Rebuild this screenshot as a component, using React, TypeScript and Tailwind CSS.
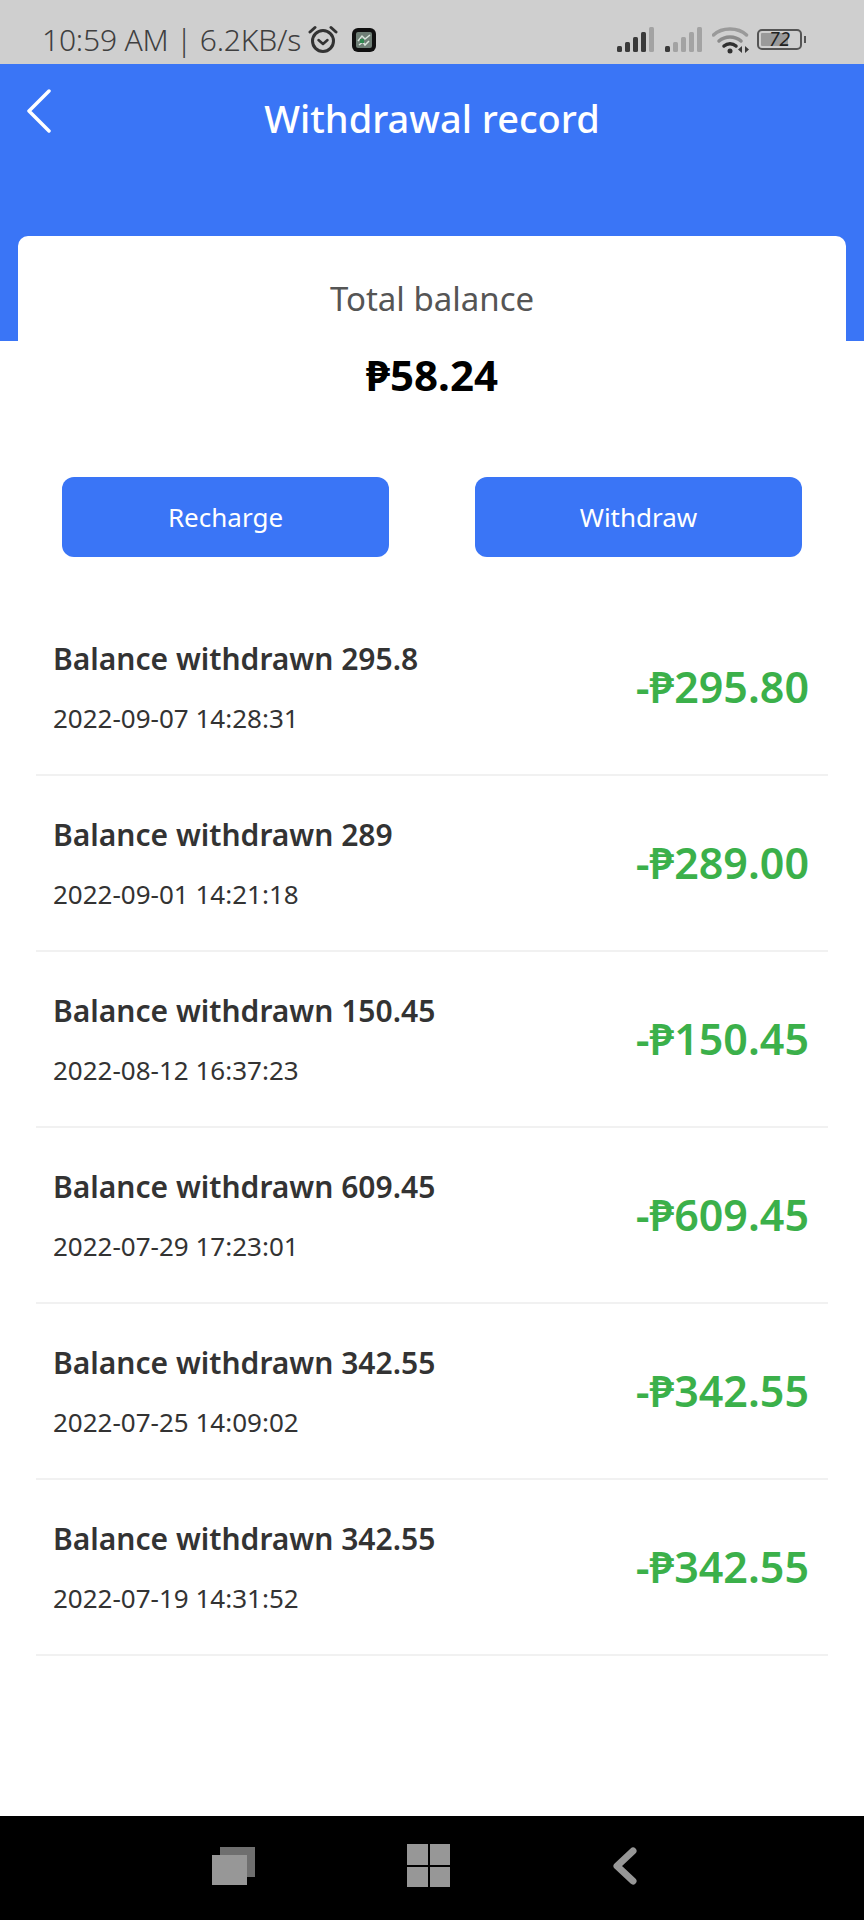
const records = [
  { title: 'Balance withdrawn 295.8', date: '2022-09-07 14:28:31', amount: '-₱295.80' },
  { title: 'Balance withdrawn 289', date: '2022-09-01 14:21:18', amount: '-₱289.00' },
  { title: 'Balance withdrawn 150.45', date: '2022-08-12 16:37:23', amount: '-₱150.45' },
  { title: 'Balance withdrawn 609.45', date: '2022-07-29 17:23:01', amount: '-₱609.45' },
  { title: 'Balance withdrawn 342.55', date: '2022-07-25 14:09:02', amount: '-₱342.55' },
  { title: 'Balance withdrawn 342.55', date: '2022-07-19 14:31:52', amount: '-₱342.55' },
];

function Signal({ level }: { level: number }) {
  const bars = [
    { x: 0, y: 19, h: 6 },
    { x: 8, y: 15, h: 10 },
    { x: 16, y: 10, h: 15 },
    { x: 24, y: 5, h: 20 },
    { x: 32, y: 0, h: 25 },
  ];
  return (
    <svg width="38" height="25" viewBox="0 0 38 25">
      {bars.map((b, i) => (
        <rect key={i} x={b.x} y={b.y} width="5" height={b.h} rx="1.5" fill={i < level ? '#3a3a3a' : '#a3a3a3'} />
      ))}
    </svg>
  );
}

function StatusBar() {
  return (
    <div className="h-16 bg-[#cfcfcf] flex items-center pl-[42px] pr-[58px] pt-[15px]">
      <span className="text-[30px] leading-none text-[#3f3f3f] font-light tracking-[-0.2px] whitespace-nowrap">10:59 AM | 6.2KB/s</span>
      <svg className="ml-[7px]" width="30" height="29" viewBox="0 0 30 29" fill="none" stroke="#333" strokeLinecap="round">
        <circle cx="15" cy="16" r="10.5" strokeWidth="3" />
        <path d="M10.5 15l4.500 4 4.500-4" strokeWidth="2.500" strokeLinejoin="round" />
        <path d="M2 7l5-4.500M28 7l-5-4.500" strokeWidth="3" />
      </svg>
      <svg className="ml-[14px]" width="24" height="24" viewBox="0 0 24 24">
        <rect width="24" height="24" rx="6" fill="#111" />
        <rect x="4" y="4" width="16" height="16" rx="2" fill="#6f7f76" />
        <path d="M6 13l4-5 3 3 5-4M7 17l4-3 2 3 4-4" stroke="#d8e6dc" strokeWidth="1.500" fill="none" />
        <rect x="8" y="11" width="4" height="4" fill="#2f8a50" />
      </svg>
      <div className="ml-auto flex items-center gap-[10px]">
        <Signal level={4} />
        <Signal level={1} />
        <svg className="-ml-[1px]" width="38" height="28" viewBox="0 0 38 28" fill="none" strokeLinecap="round">
          <path d="M1.500 9C10 1 26 1 34.500 9" stroke="#9a9a9a" strokeWidth="3.500" />
          <path d="M7 15c6-5.500 16-5.500 22 0" stroke="#8a8a8a" strokeWidth="3.500" />
          <path d="M12 20c3.500-3 8.500-3 12 0" stroke="#2f2f2f" strokeWidth="3.500" />
          <circle cx="18" cy="25" r="2.500" fill="#2f2f2f" />
          <path d="M30 20v7l-4-3.500zM33 27v-7l4 3.500z" fill="#3a3a3a" />
        </svg>
        <div className="-ml-[3px] flex items-center">
          <div className="relative w-[45px] h-[21px] border-2 border-[#555] rounded-[5px] p-[2px]">
            <div className="h-full w-[72%] bg-[#9a9a9a] rounded-[1px]" />
            <span className="absolute inset-0 flex items-center justify-center text-[19px] leading-none italic text-[#222]">72</span>
          </div>
          <div className="ml-[2px] w-[2px] h-[7px] bg-[#555]" />
        </div>
      </div>
    </div>
  );
}

function NavBar() {
  return (
    <div className="h-[104px] bg-black flex items-start pt-[28px] pl-[212px]">
      <div className="relative w-[43px] h-[38px] mt-[3px]">
        <div className="absolute right-0 top-0 w-[35px] h-[30px] bg-[#6f6f6f]" />
        <div className="absolute left-0 bottom-0 w-[35px] h-[30px] bg-[#979797]" />
      </div>
      <div className="ml-[152px] grid grid-cols-2 gap-[2px] w-[43px] h-[43px]">
        <div className="bg-[#979797]" />
        <div className="bg-[#979797]" />
        <div className="bg-[#979797]" />
        <div className="bg-[#979797]" />
      </div>
      <svg className="ml-[162px] mt-[3px]" width="25" height="38" viewBox="0 0 25 38" fill="none">
        <path d="M21 4L5 19l16 15" stroke="#979797" strokeWidth="7" strokeLinecap="round" strokeLinejoin="round" />
      </svg>
    </div>
  );
}

export default function App() {
  return (
    <div className="min-h-[1920px] flex flex-col bg-white font-['Noto_Sans',sans-serif]">
      <StatusBar />
      <div className="h-[277px] bg-[#3a75f6] relative">
        <svg className="absolute left-[26px] top-[25px]" width="26" height="44" viewBox="0 0 26 44" fill="none">
          <path d="M23 2L3 22l20 20" stroke="#fff" strokeWidth="3.500" strokeLinecap="round" strokeLinejoin="round" />
        </svg>
        <div className="pt-[28px] text-center text-[38px] leading-[52px] font-medium text-white">Withdrawal record</div>
      </div>
      <div className="flex-1 -mt-[105px] relative">
        <div className="mx-[18px] bg-white rounded-t-[10px] pt-[40px]">
          <div className="text-center text-[33px] leading-[46px] text-[#555]">Total balance</div>
          <div className="mt-[24px] text-center text-[42px] leading-[58px] font-bold text-black">₱58.24</div>
          <div className="mt-[73px] px-[44px] flex justify-between">
            <button className="w-[327px] h-[80px] rounded-[12px] bg-[#3a75f6] text-white text-[26px]">Recharge</button>
            <button className="w-[327px] h-[80px] rounded-[12px] bg-[#3a75f6] text-white text-[26px]">Withdraw</button>
          </div>
        </div>
        <div className="mx-9 mt-[43px]">
          {records.map((r, i) => (
            <div key={i} className="h-[176px] border-b-2 border-[#f1f1f1] pl-[17px] pr-[19px] flex items-center justify-between">
              <div>
                <div className="text-[30px] leading-[42px] font-semibold text-[#333] whitespace-nowrap">{r.title}</div>
                <div className="mt-[20px] text-[26px] leading-[36px] text-[#333]">{r.date}</div>
              </div>
              <div className="text-[43px] leading-[60px] font-semibold text-[#3bb04a] whitespace-nowrap">{r.amount}</div>
            </div>
          ))}
        </div>
      </div>
      <NavBar />
    </div>
  );
}
